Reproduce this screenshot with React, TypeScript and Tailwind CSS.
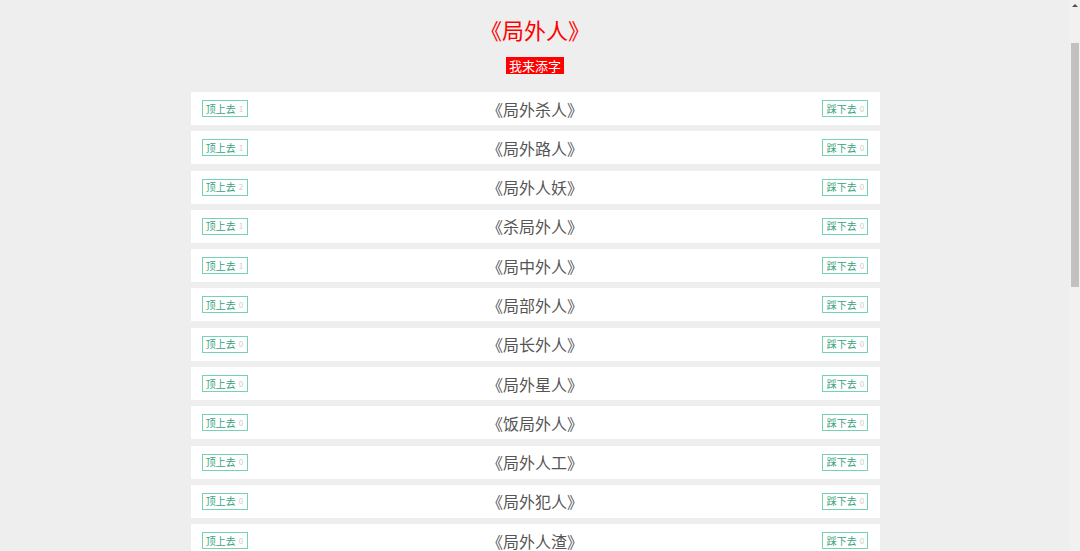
import React from 'react';

const items = [
  { title: '《局外杀人》', up: 1, down: 0 },
  { title: '《局外路人》', up: 1, down: 0 },
  { title: '《局外人妖》', up: 2, down: 0 },
  { title: '《杀局外人》', up: 1, down: 0 },
  { title: '《局中外人》', up: 1, down: 0 },
  { title: '《局部外人》', up: 0, down: 0 },
  { title: '《局长外人》', up: 0, down: 0 },
  { title: '《局外星人》', up: 0, down: 0 },
  { title: '《饭局外人》', up: 0, down: 0 },
  { title: '《局外人工》', up: 0, down: 0 },
  { title: '《局外犯人》', up: 0, down: 0 },
  { title: '《局外人渣》', up: 0, down: 0 },
];

const VoteButton = ({ label, count }: { label: string; count: number }) => (
  <button className="flex items-center h-[17px] w-[46px] justify-center gap-[3px] border border-[#74d3b4] bg-white text-[10px] leading-none text-[#3a9f7c]">
    <span>{label}</span>
    <span className="text-[8px] text-[#cccccc]">{count}</span>
  </button>
);

const App = () => {
  return (
    <div
      className="h-[551px] flex overflow-hidden bg-[#eeeeee]"
      style={{ fontFamily: '"Noto Sans CJK SC", "Liberation Sans", sans-serif' }}
    >
      <div className="flex-1 overflow-hidden">
        <div className="w-[689px] mx-auto pt-[13px]">
          <h1 className="text-center text-[22px] leading-[33px] text-[#ff0000]">《局外人》</h1>
          <div className="flex justify-center mt-[11px]">
            <span className="bg-[#ff0000] text-white text-[13px] leading-[17px] px-[3px]">我来添字</span>
          </div>
          <ul className="mt-[18px] flex flex-col gap-[6.3px]">
            {items.map((item) => (
              <li key={item.title} className="h-[33px] shrink-0 bg-white flex items-center justify-between px-[11px]">
                <VoteButton label="顶上去" count={item.up} />
                <span className="text-[16px] text-[#555555]">{item.title}</span>
                <VoteButton label="踩下去" count={item.down} />
              </li>
            ))}
          </ul>
        </div>
      </div>
      {/* scrollbar */}
      <div className="w-[10px] shrink-0 bg-[#f1f1f1] flex flex-col items-center">
        <div className="mt-[4px] w-0 h-0 border-l-[3px] border-r-[3px] border-b-[3px] border-l-transparent border-r-transparent border-b-[#505050]" />
        <div className="mt-[36px] w-[8px] h-[244px] bg-[#c1c1c1]" />
      </div>
    </div>
  );
};

export default App;
